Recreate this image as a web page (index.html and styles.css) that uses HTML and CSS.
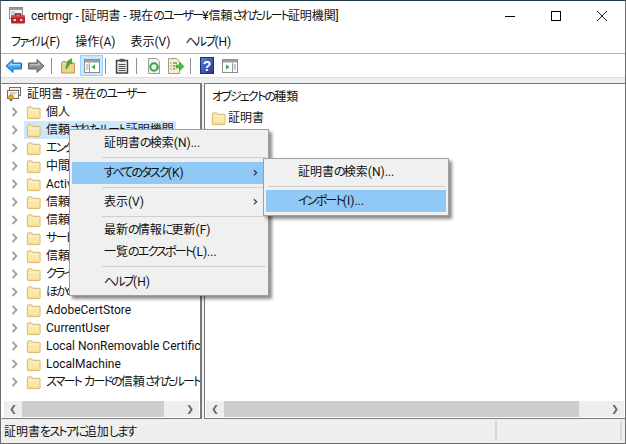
FILE: index.html
```html
<!DOCTYPE html>
<html lang="ja">
<head>
<meta charset="utf-8">
<title>certmgr</title>
<link rel="stylesheet" href="styles.css">
</head>
<body>
<svg class="defs" width="0" height="0">
  <defs>
    <linearGradient id="helpfill" x1="0" y1="0" x2="1" y2="1"><stop offset="0" stop-color="#5a7fe0"/><stop offset="1" stop-color="#24398f"/></linearGradient>
    <symbol id="folder" viewBox="0 0 16 15">
      <path d="M1.500 13.500V2.500l.7-1h4l1 1.500h7.300l.5.5v10l-.5.500H2z" fill="#fbe8a6" stroke="#d8b565"/>
      <path d="M2.500 5.500h11.500" stroke="#fdf4cf"/>
      <path d="M2.500 12.500h11.500" stroke="#f0d48a"/>
    </symbol>
    <symbol id="chev" viewBox="0 0 10 10">
      <path d="M2.500 1l4 4-4 4" fill="none" stroke="#a0a0a0" stroke-width="1.800"/>
    </symbol>
  </defs>
</svg>
<div class="window">
  <header class="titlebar">
    <svg class="app-icon" width="18" height="18" viewBox="0 0 18 18">
      <rect x="0.500" y="0.500" width="13" height="11" fill="#f4f4f4" stroke="#8a8a8a"/>
      <rect x="1" y="1" width="12" height="2" fill="#9a9a9a"/>
      <path d="M2 5h4M2 7h4M2 9h4" stroke="#a8a8a8"/>
      <path d="M6.500 9V7h5v2" fill="none" stroke="#7d1d1d" stroke-width="1.400"/>
      <rect x="2" y="8.500" width="14" height="8" rx="1" fill="#b5262a"/>
      <rect x="2" y="8.500" width="14" height="2" fill="#d7474a"/>
      <rect x="4.500" y="12" width="2.500" height="2" fill="#f3d0c8"/>
      <rect x="11" y="12" width="2.500" height="2" fill="#f3d0c8"/>
    </svg>
    <span class="title-text">certmgr - [証明書 - 現在<span class="k">のユーザー</span>¥信頼<span class="k">されたルート</span>証明機関]</span>
    <div class="caption">
      <button class="cap-btn" aria-label="最小化"><svg width="12" height="12" viewBox="0 0 12 12"><path d="M1 6.500h10" stroke="#000"/></svg></button>
      <button class="cap-btn" aria-label="最大化"><svg width="12" height="12" viewBox="0 0 12 12"><rect x="1.500" y="1.500" width="9" height="9" fill="none" stroke="#000"/></svg></button>
      <button class="cap-btn" aria-label="閉じる"><svg width="12" height="12" viewBox="0 0 12 12"><path d="M1 1l10 10M11 1L1 11" stroke="#000" stroke-width="0.900"/></svg></button>
    </div>
  </header>
  <nav class="menubar">
    <span class="menu-title"><span class="k">ファイル</span>(F)</span>
    <span class="menu-title">操作(A)</span>
    <span class="menu-title">表示(V)</span>
    <span class="menu-title"><span class="k">ヘルプ</span>(H)</span>
  </nav>
  <div class="toolbar">
    <span class="tool"><svg width="18" height="16" viewBox="0 0 18 16"><path d="M1 8l7-6.500V5h8.500v6H8v3.500z" fill="#3fa3ec" stroke="#1c6db5"/><path d="M3 8l4-3.500V6h8v1.500H7" fill="#a6dcff"/></svg></span>
    <span class="tool"><svg width="18" height="16" viewBox="0 0 18 16"><path d="M17 8l-7-6.500V5H1.500v6H10v3.500z" fill="#8c8c8c" stroke="#5f5f5f"/><path d="M3 6h8V4l3 3.500H3z" fill="#bdbdbd"/></svg></span>
    <span class="tool-sep sep-a"></span>
    <span class="tool"><svg width="16" height="16" viewBox="0 0 16 16"><path d="M1.500 15V4.500l1-1h3l1 1.500h8v10z" fill="#efd28a" stroke="#b99a4f"/><path d="M6 11c0-3 .5-5 2-6.500L6.500 4l5-3.500L12 6l-1.500-1C9 7 8 9 6 11z" fill="#3fae3c" stroke="#2a8a2a" stroke-width="0.500"/></svg></span>
    <span class="tool tool-on"><svg width="16" height="14" viewBox="0 0 16 14"><rect x="0.500" y="0.500" width="15" height="13" fill="#fff" stroke="#8e8e8e"/><rect x="1" y="1" width="14" height="2.500" fill="#9aa0a6"/><path d="M5.500 4v9" stroke="#9a9a9a"/><path d="M2 6h2.500M2 8h2.500M2 10h2.500" stroke="#9a9a9a"/><path d="M11 5.500v5L7.500 8z" fill="#2aa84a"/></svg></span>
    <span class="tool-sep sep-b"></span>
    <span class="tool"><svg width="14" height="16" viewBox="0 0 14 16"><rect x="1.500" y="2.500" width="11" height="12.500" fill="#e9e9e9" stroke="#3b3b3b" stroke-width="1.400"/><rect x="4.500" y="0.800" width="5" height="3" fill="#555"/><path d="M3.500 6.500h7M3.500 8.500h7M3.500 10.500h7M3.500 12.500h7" stroke="#555"/></svg></span>
    <span class="tool-sep sep-c"></span>
    <span class="tool"><svg width="14" height="16" viewBox="0 0 14 16"><path d="M1.500 .500h8l3 3v12h-11z" fill="#f4f4f4" stroke="#9c9c9c"/><circle cx="7" cy="9" r="3.700" fill="none" stroke="#35a83c" stroke-width="2"/><path d="M9 9l3 0-1.500 3z" fill="#35a83c"/></svg></span>
    <span class="tool"><svg width="18" height="16" viewBox="0 0 18 16"><path d="M1.500 .500h8l3 3v12h-11z" fill="#f7efd4" stroke="#a39b83"/><path d="M3.500 5h1M6 5h4M3.500 8h1M6 8h2M3.500 11h1M6 11h2" stroke="#555"/><path d="M9 7h4V4.500L17 8.500l-4 4V10H9z" fill="#4dbb45" stroke="#2f9a34" stroke-width="0.600"/></svg></span>
    <span class="tool-sep sep-d"></span>
    <span class="tool"><svg width="14" height="17" viewBox="0 0 14 17"><rect x="0.500" y="0.500" width="13" height="16" fill="url(#helpfill)" stroke="#1c2f78"/><text class="help-mark" x="7" y="14" text-anchor="middle">?</text></svg></span>
    <span class="tool tool-last"><svg width="16" height="14" viewBox="0 0 16 14"><rect x="0.500" y="0.500" width="15" height="13" fill="#fff" stroke="#8e8e8e"/><rect x="1" y="1" width="14" height="2.500" fill="#9aa0a6"/><path d="M10.500 4v9" stroke="#9a9a9a"/><path d="M11.500 6h2.500M11.500 8h2.500M11.500 10h2.500" stroke="#9a9a9a"/><path d="M4 5.500v5L7.500 8z" fill="#2aa84a"/></svg></span>
  </div>
  <div class="band"></div>
  <main class="panes">
    <section class="pane pane-tree">
      <div class="pane-body">
        <div class="row row-root">
          <svg class="cert-icon" width="16" height="16" viewBox="0 0 16 16"><rect x="3.500" y="1.500" width="11" height="8" fill="#f7efd8" stroke="#6f6f6f"/><rect x="1.500" y="4.500" width="11" height="8" fill="#fff8e4" stroke="#6f6f6f"/><path d="M3.500 7h7M3.500 9h4" stroke="#b9a77c"/><circle cx="5" cy="11.500" r="2.600" fill="#e8a21f" stroke="#b3761a" stroke-width="0.600"/><path d="M4 13.500v2l1-.7 1 .7v-2" fill="#3b6bc4"/></svg>
          <span class="row-label">証明書 - 現在<span class="k">のユーザー</span></span>
        </div>
        <div class="row"><svg class="chev"><use href="#chev"/></svg><svg class="folder"><use href="#folder"/></svg><span class="row-label">個人</span></div>
        <div class="row row-selected"><svg class="chev"><use href="#chev"/></svg><svg class="folder"><use href="#folder"/></svg><span class="row-label">信頼<span class="k">されたルート</span>証明機関</span></div>
        <div class="row"><svg class="chev"><use href="#chev"/></svg><svg class="folder"><use href="#folder"/></svg><span class="row-label"><span class="k">エンタープライズの</span>信頼</span></div>
        <div class="row"><svg class="chev"><use href="#chev"/></svg><svg class="folder"><use href="#folder"/></svg><span class="row-label">中間証明機関</span></div>
        <div class="row"><svg class="chev"><use href="#chev"/></svg><svg class="folder"><use href="#folder"/></svg><span class="row-label">Active Directory <span class="k">のユーザー</span> <span class="k">オブジェクト</span></span></div>
        <div class="row"><svg class="chev"><use href="#chev"/></svg><svg class="folder"><use href="#folder"/></svg><span class="row-label">信頼<span class="k">された</span>発行元</span></div>
        <div class="row"><svg class="chev"><use href="#chev"/></svg><svg class="folder"><use href="#folder"/></svg><span class="row-label">信頼<span class="k">されていない</span>証明書</span></div>
        <div class="row"><svg class="chev"><use href="#chev"/></svg><svg class="folder"><use href="#folder"/></svg><span class="row-label"><span class="k">サードパーティ</span> <span class="k">ルート</span>証明機関</span></div>
        <div class="row"><svg class="chev"><use href="#chev"/></svg><svg class="folder"><use href="#folder"/></svg><span class="row-label">信頼<span class="k">されたユーザー</span></span></div>
        <div class="row"><svg class="chev"><use href="#chev"/></svg><svg class="folder"><use href="#folder"/></svg><span class="row-label"><span class="k">クライアント</span>認証発行者</span></div>
        <div class="row"><svg class="chev"><use href="#chev"/></svg><svg class="folder"><use href="#folder"/></svg><span class="row-label"><span class="k">ほかの</span>人</span></div>
        <div class="row"><svg class="chev"><use href="#chev"/></svg><svg class="folder"><use href="#folder"/></svg><span class="row-label">AdobeCertStore</span></div>
        <div class="row"><svg class="chev"><use href="#chev"/></svg><svg class="folder"><use href="#folder"/></svg><span class="row-label">CurrentUser</span></div>
        <div class="row"><svg class="chev"><use href="#chev"/></svg><svg class="folder"><use href="#folder"/></svg><span class="row-label">Local NonRemovable Certificates</span></div>
        <div class="row"><svg class="chev"><use href="#chev"/></svg><svg class="folder"><use href="#folder"/></svg><span class="row-label">LocalMachine</span></div>
        <div class="row"><svg class="chev"><use href="#chev"/></svg><svg class="folder"><use href="#folder"/></svg><span class="row-label"><span class="k">スマート</span> <span class="k">カードの</span>信頼<span class="k">されたルート</span></span></div>
      </div>
      <div class="hscroll hscroll-tree">
        <span class="arrow">&#x276E;</span><span class="thumb thumb-tree"></span><span class="track"></span><span class="arrow">&#x276F;</span>
      </div>
    </section>
    <section class="pane pane-list">
      <div class="pane-body list-body">
        <div class="list-head"><span class="k">オブジェクトの</span>種類</div>
        <div class="list-item"><svg class="folder"><use href="#folder"/></svg><span>証明書</span></div>
      </div>
      <div class="hscroll hscroll-list">
        <span class="arrow">&#x276E;</span><span class="thumb thumb-list"></span><span class="track"></span><span class="arrow">&#x276F;</span>
      </div>
    </section>
  </main>
  <footer class="statusbar">
    <span class="status-main">証明書<span class="k">をストアに</span>追加<span class="k">します</span></span>
    <span class="status-cell"></span>
  </footer>

  <div class="ctx ctx-main">
    <div class="ctx-item">証明書<span class="k">の</span>検索(N)...</div>
    <div class="ctx-sep ctx-sep-a"></div>
    <div class="ctx-item ctx-hot"><span class="k">すべてのタスク</span>(K)<span class="ctx-arrow">&#x203A;</span></div>
    <div class="ctx-sep ctx-sep-b"></div>
    <div class="ctx-item">表示(V)<span class="ctx-arrow">&#x203A;</span></div>
    <div class="ctx-sep ctx-sep-c"></div>
    <div class="ctx-item">最新<span class="k">の</span>情報<span class="k">に</span>更新(F)</div>
    <div class="ctx-item">一覧<span class="k">のエクスポート</span>(L)...</div>
    <div class="ctx-sep ctx-sep-a"></div>
    <div class="ctx-item"><span class="k">ヘルプ</span>(H)</div>
  </div>
  <div class="ctx ctx-sub">
    <div class="ctx-item">証明書<span class="k">の</span>検索(N)...</div>
    <div class="ctx-sep ctx-sep-b"></div>
    <div class="ctx-item ctx-hot"><span class="k">インポート</span>(I)...</div>
  </div>
</div>
</body>
</html>
```
FILE: styles.css
```css
* { box-sizing: border-box; }
html, body { margin: 0; padding: 0; background: #fff; }
body { width: 626px; height: 444px; overflow: hidden; font: 12px/16px Roboto, "Noto Sans CJK JP", sans-serif; font-feature-settings: "palt"; color: #111; }
.k { letter-spacing: -1.8px; }
.defs { position: absolute; }
.window { position: relative; width: 626px; height: 444px; display: flex; flex-direction: column; background: #fff; border-top: 1px solid #1f3a48; border-left: 1px solid #6d6d6d; border-right: 1px solid #6d6d6d; border-bottom: 1px solid #6d6d6d; }
.titlebar { height: 29px; display: flex; align-items: center; padding-left: 8px; flex: none; }
.app-icon { flex: none; }
.title-text { margin-left: 4px; white-space: nowrap; flex: 1; letter-spacing: -0.1px; }
.caption { display: flex; height: 29px; }
.cap-btn { width: 46px; height: 29px; padding: 0; border: 0; background: none; display: flex; align-items: center; justify-content: center; }
.menubar { height: 23px; display: flex; align-items: center; padding-left: 3px; flex: none; }
.menu-title { padding: 0 7px; margin-right: 1px; white-space: nowrap; }
.toolbar { height: 24px; flex: none; display: flex; align-items: center; padding-left: 2px; border-top: 1px solid #b4b4bc; }
.tool { width: 22px; height: 21px; display: flex; align-items: center; justify-content: center; flex: none; }
.tool-on { width: 23px; background: #cce8ff; border: 1px solid #99d1ff; margin-left: 1px; }
.tool-last { margin-left: 1px; }
.tool-sep { width: 1px; height: 16px; background: #8f8f8f; flex: none; }
.sep-a { margin: 0 5px 0 4px; }
.sep-b { margin: 0 5px 0 2px; }
.sep-c { margin: 0 6px 0 3px; }
.sep-d { margin: 0 5px 0 3px; }
.help-mark { font: bold 14px "Liberation Sans", sans-serif; fill: #fff; }
.band { height: 6px; flex: none; background: #efefef; border-top: 1px solid #e0e0e0; }
.panes { flex: 1; display: flex; min-height: 0; gap: 2px; background: #f0f0f0; }
.pane { display: flex; flex-direction: column; background: #fff; border: 1px solid #7a7a7a; border-width: 1px 2px 1px 1px; min-width: 0; }
.pane-tree { width: 201px; flex: none; border-left-color: #fff; }
.pane-list { flex: 1; border-right: 0; }
.pane-body { flex: 1; min-height: 0; overflow: hidden; }
.row { height: 18px; display: flex; align-items: center; white-space: nowrap; }
.row-root { height: 19px; padding-left: 4px; }
.row-selected { background: linear-gradient(#cce8ff, #cce8ff) 22px 0 / 152px 100% no-repeat; }
.chev { width: 10px; height: 10px; margin-left: 8px; flex: none; }
.folder { width: 15px; height: 15px; margin-left: 6px; flex: none; }
.cert-icon { flex: none; }
.row-label { padding: 0 3px; height: 18px; line-height: 18px; margin-left: 2px; }
.list-body { padding: 4px 0 0 6px; }
.list-head { height: 18px; line-height: 18px; padding-left: 1px; }
.list-item { display: flex; align-items: center; height: 18px; margin-top: 3px; }
.list-item .folder { margin-left: 0; }
.list-item span { margin-left: 2px; }
.hscroll { height: 16px; flex: none; display: flex; background: #eee; margin: 0 0 1px 2px; }
.hscroll-tree { margin-right: 1px; }
.hscroll-list { margin-left: 1px; margin-right: 1px; }
.arrow { width: 18px; flex: none; text-align: center; font: bold 9px/16px "DejaVu Sans", sans-serif; color: #606060; }
.thumb { background: #cdcdcd; flex: none; }
.thumb-tree { width: 142px; }
.thumb-list { width: 355px; }
.track { flex: 1; }
.statusbar { height: 24px; flex: none; display: flex; background: #efefef; align-items: center; }
.status-main { width: 496px; padding-left: 3px; border-right: 2px solid #d8d8d8; height: 20px; line-height: 22px; flex: none; }
.status-cell { width: 125px; border-right: 2px solid #d8d8d8; height: 20px; flex: none; }
.ctx { position: absolute; background: #f0f0f0; border: 1px solid #a0a0a0; box-shadow: 3px 3px 3px rgba(0,0,0,.45); padding: 2px; z-index: 2; }
.ctx-main { left: 68px; top: 128px; width: 200px; height: 167px; }
.ctx-sub { left: 262px; top: 157px; width: 186px; height: 58px; z-index: 3; }
.ctx-item { height: 22px; line-height: 22px; padding-left: 32px; position: relative; white-space: nowrap; }
.ctx-hot { background: #90c8f6; }
.ctx-arrow { position: absolute; right: 8px; top: 0; font: 14px/20px "DejaVu Sans", sans-serif; }
.ctx-sep { border-top: 1px solid #d0d0d0; margin-left: 30px; margin-top: 3px; margin-bottom: -3px; }
.ctx-sep-a { height: 8px; }
.ctx-sep-b { height: 7px; }
.ctx-sep-c { height: 6px; }
.ctx-sub .ctx-sep { margin-left: 2px; }
```
